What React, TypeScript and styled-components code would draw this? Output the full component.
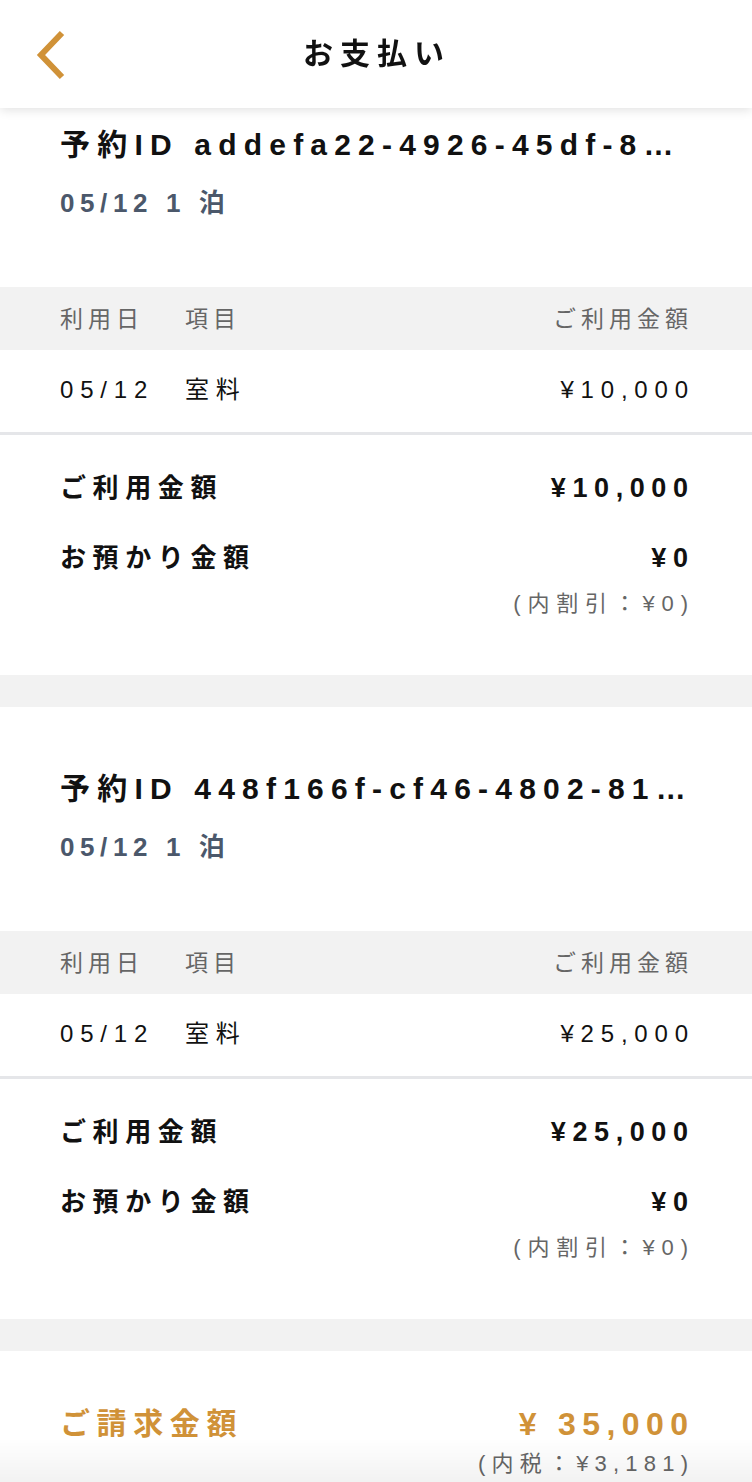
import { FunctionComponent } from 'react';
import styled, { createGlobalStyle } from 'styled-components';

// Data
interface IReservation {
    id: string,
    date: string,
    nights: number,
    items: { date: string, name: string, amount: string }[],
    total: string,
    deposit: string,
    discount: string,
}

const reservations: IReservation[] = [
    {
        id: 'addefa22-4926-45df-8a3c-91b2e7f0c1d4',
        date: '05/12',
        nights: 1,
        items: [{ date: '05/12', name: '室料', amount: '¥10,000' }],
        total: '¥10,000',
        deposit: '¥0',
        discount: '¥0',
    },
    {
        id: '448f166f-cf46-4802-81d2-5a7c3e9b0f16',
        date: '05/12',
        nights: 1,
        items: [{ date: '05/12', name: '室料', amount: '¥25,000' }],
        total: '¥25,000',
        deposit: '¥0',
        discount: '¥0',
    },
];

const theme = {
    gold: '#D09238',
    black: '#111111',
    gray: '#666666',
    slate: '#4B586B',
    band: '#F2F2F2',
    line: '#E5E6E9',
    font: '"Liberation Sans", "Noto Sans CJK JP", sans-serif',
};

const GlobalStyle = createGlobalStyle`
    * { box-sizing: border-box; }
    body {
        margin: 0;
        background: #ffffff;
        font-family: ${theme.font};
        color: ${theme.black};
    }
`;

const BackIcon = () => (
    <svg width="44" height="56" viewBox="0 0 44 56" fill="none">
        <polyline points="34,6 13,28 34,50" stroke={theme.gold} strokeWidth="6" strokeLinecap="butt" strokeLinejoin="miter" />
    </svg>
);

const ReservationCard: FunctionComponent<{ r: IReservation }> = ({ r }) => (
    <StyledCard>
        <div className="head">
            <h2 className="title">予約ID {r.id}</h2>
            <p className="stay">{r.date} {r.nights} 泊</p>
        </div>
        <TableRow $head>
            <span className="date">利用日</span>
            <span className="name">項目</span>
            <span className="amount">ご利用金額</span>
        </TableRow>
        {r.items.map((item, i) => (
            <TableRow key={i}>
                <span className="date">{item.date}</span>
                <span className="name">{item.name}</span>
                <span className="amount">{item.amount}</span>
            </TableRow>
        ))}
        <div className="summary">
            <SummaryLine>
                <span>ご利用金額</span>
                <span className="num">{r.total}</span>
            </SummaryLine>
            <SummaryLine>
                <span>お預かり金額</span>
                <span className="num">{r.deposit}</span>
            </SummaryLine>
            <Note>(内割引：{r.discount})</Note>
        </div>
    </StyledCard>
);

export default function App() {
    return (
        <>
            <GlobalStyle />
            <StyledHeader>
                <button className="back" aria-label="戻る"><BackIcon /></button>
                <h1>お支払い</h1>
                <span />
            </StyledHeader>
            <StyledMain>
                {reservations.map((r) => <ReservationCard key={r.id} r={r} />)}
                <StyledTotal>
                    <span className="label">ご請求金額</span>
                    <div className="right">
                        <span className="value">¥ 35,000</span>
                        <Note>(内税：¥3,181)</Note>
                    </div>
                </StyledTotal>
            </StyledMain>
            <BottomShade />
        </>
    );
}

const StyledHeader = styled.header`
    position: fixed;
    top: 0;
    left: 0;
    right: 0;
    height: 108px;
    background: #ffffff;
    display: grid;
    grid-template-columns: 1fr auto 1fr;
    align-items: center;
    box-shadow: 0 2px 10px rgba(0, 0, 0, 0.12);
    z-index: 10;

    .back {
        justify-self: start;
        margin-left: 28px;
        margin-top: 2px;
        padding: 0;
        border: none;
        background: none;
        display: flex;
    }

    h1 {
        margin: 0;
        font-size: 30px;
        font-weight: 700;
        letter-spacing: 7px;
        padding-left: 2px;
        line-height: 40px;
    }
`;

const StyledMain = styled.main`
    padding-top: 63px;
    display: flex;
    flex-direction: column;
    gap: 32px;
    background: ${theme.band};
`;

const StyledCard = styled.section`
    background: #ffffff;
    padding-bottom: 56px;

    .head {
        padding: 62px 60px 66px 60px;
    }

    .title {
        margin: 0;
        font-size: 30px;
        line-height: 40px;
        font-weight: 700;
        letter-spacing: 7.2px;
        white-space: nowrap;
        overflow: hidden;
        text-overflow: ellipsis;
    }

    .stay {
        margin: 20px 0 0;
        font-size: 26px;
        line-height: 36px;
        font-weight: 700;
        letter-spacing: 5.6px;
        color: ${theme.slate};
    }

    .summary {
        padding: 36px 64px 0 60px;
        display: flex;
        flex-direction: column;
        gap: 36px;
    }
`;

const TableRow = styled.div<{ $head?: boolean }>`
    display: flex;
    align-items: center;
    height: ${(p) => (p.$head ? '63px' : '85px')};
    padding: ${(p) => (p.$head ? '0 64px 0 60px' : '0 64px 3px 60px')};
    background: ${(p) => (p.$head ? theme.band : '#ffffff')};
    border-bottom: ${(p) => (p.$head ? 'none' : `3px solid ${theme.line}`)};
    font-size: ${(p) => (p.$head ? '23px' : '24px')};
    color: ${(p) => (p.$head ? theme.gray : theme.black)};
    letter-spacing: ${(p) => (p.$head ? '5px' : '6.8px')};
    line-height: 30px;

    .date {
        width: 125px;
    }
    .name {
        flex: 1;
    }
    .amount {
        text-align: right;
        margin-right: ${(p) => (p.$head ? '-5px' : '-6.8px')};
    }
`;

const SummaryLine = styled.div`
    display: flex;
    justify-content: space-between;
    align-items: center;
    font-size: 26px;
    line-height: 34px;
    font-weight: 700;
    letter-spacing: 6.6px;

    .num {
        font-size: 27px;
        letter-spacing: 6.6px;
        margin-right: -6.6px;
    }
`;

const Note = styled.div`
    align-self: flex-end;
    margin-top: -22px;
    margin-right: -6.8px;
    font-size: 22px;
    line-height: 30px;
    color: ${theme.gray};
    letter-spacing: 6.8px;
`;

const StyledTotal = styled.section`
    background: #ffffff;
    padding: 53px 64px 40px 60px;
    display: flex;
    justify-content: space-between;
    align-items: flex-start;

    .label {
        font-size: 30px;
        line-height: 40px;
        font-weight: 700;
        letter-spacing: 6.6px;
        color: ${theme.gold};
    }

    .right {
        display: flex;
        flex-direction: column;
        align-items: flex-end;
    }

    .value {
        font-size: 32px;
        line-height: 40px;
        font-weight: 700;
        letter-spacing: 6.4px;
        margin-right: -6.4px;
        color: ${theme.gold};
    }

    ${Note} {
        margin-top: 5px;
        letter-spacing: 6.2px;
        margin-right: -6.2px;
    }
`;

const BottomShade = styled.div`
    position: fixed;
    left: 0;
    right: 0;
    bottom: 0;
    height: 44px;
    background: linear-gradient(to bottom, rgba(0, 0, 0, 0), rgba(0, 0, 0, 0.05));
    pointer-events: none;
`;
